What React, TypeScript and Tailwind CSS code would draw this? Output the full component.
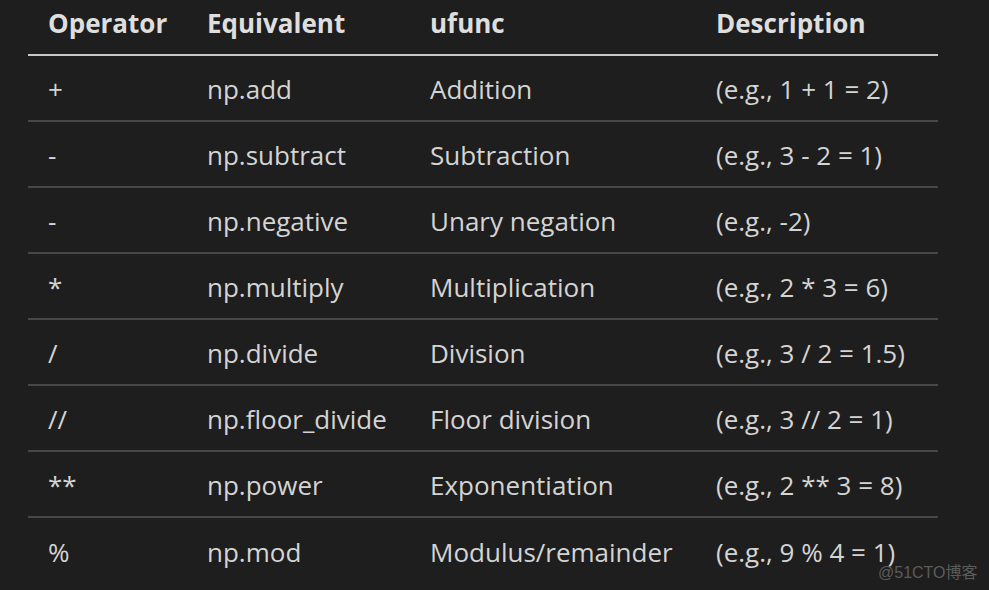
type Row = {
  operator: string;
  equivalent: string;
  ufunc: string;
  description: string;
};

const rows: Row[] = [
  { operator: '+', equivalent: 'np.add', ufunc: 'Addition', description: '(e.g., 1 + 1 = 2)' },
  { operator: '-', equivalent: 'np.subtract', ufunc: 'Subtraction', description: '(e.g., 3 - 2 = 1)' },
  { operator: '-', equivalent: 'np.negative', ufunc: 'Unary negation', description: '(e.g., -2)' },
  { operator: '*', equivalent: 'np.multiply', ufunc: 'Multiplication', description: '(e.g., 2 * 3 = 6)' },
  { operator: '/', equivalent: 'np.divide', ufunc: 'Division', description: '(e.g., 3 / 2 = 1.5)' },
  { operator: '//', equivalent: 'np.floor_divide', ufunc: 'Floor division', description: '(e.g., 3 // 2 = 1)' },
  { operator: '**', equivalent: 'np.power', ufunc: 'Exponentiation', description: '(e.g., 2 ** 3 = 8)' },
  { operator: '%', equivalent: 'np.mod', ufunc: 'Modulus/remainder', description: '(e.g., 9 % 4 = 1)' },
];

const headers = ['Operator', 'Equivalent', 'ufunc', 'Description'];

export default function App() {
  return (
    <div className="relative min-h-screen bg-[#1e1e1e] pl-[28px] font-['Open_Sans','Noto_Sans',sans-serif] text-[26px]">
      <table className="w-[910px] table-fixed border-collapse">
        <colgroup>
          <col className="w-[159px]" />
          <col className="w-[223px]" />
          <col className="w-[286px]" />
          <col className="w-[242px]" />
        </colgroup>
        <thead>
          <tr className="h-[55px] border-b-2 border-[#c8c8c8]">
            {headers.map((h) => (
              <th
                key={h}
                className="pb-[9px] pl-[20px] text-left align-middle font-bold leading-none text-[#dedede]"
              >
                {h}
              </th>
            ))}
          </tr>
        </thead>
        <tbody>
          {rows.map((r, i) => (
            <tr
              key={r.equivalent}
              className={`h-[66px] ${i < rows.length - 1 ? 'border-b-2 border-[#474747]' : ''}`}
            >
              <td className="pl-[20px] pt-[2px] align-middle leading-none text-[#d4d4d4]">{r.operator}</td>
              <td className="pl-[20px] pt-[2px] align-middle leading-none text-[#d4d4d4]">{r.equivalent}</td>
              <td className="pl-[20px] pt-[2px] align-middle leading-none text-[#d4d4d4]">{r.ufunc}</td>
              <td className="whitespace-nowrap pl-[20px] pt-[2px] align-middle leading-none text-[#d4d4d4]">
                {r.description}
              </td>
            </tr>
          ))}
        </tbody>
      </table>

      <span className="absolute left-[878px] top-[561px] font-['Liberation_Sans','Noto_Sans_CJK_SC',sans-serif] text-[16px] text-[#5c5c5c]">
        @51CTO博客
      </span>
    </div>
  );
}
